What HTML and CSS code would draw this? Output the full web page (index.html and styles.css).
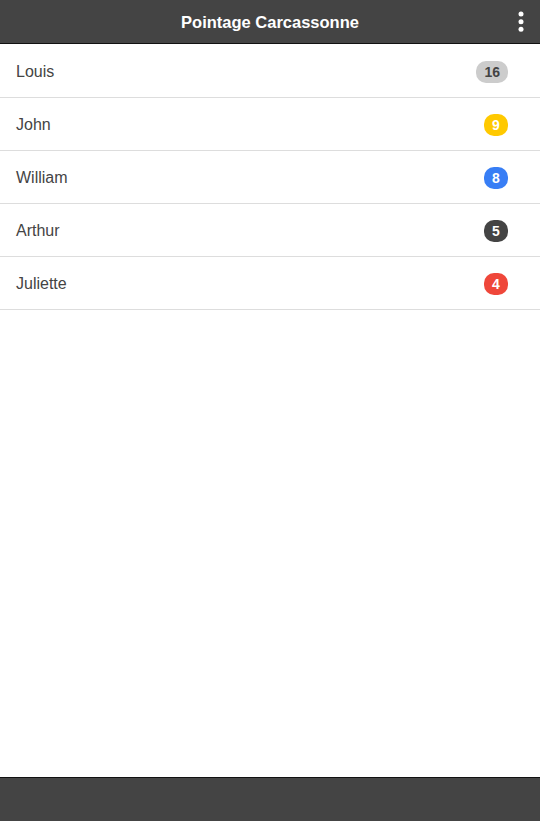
FILE: index.html
```html
<!DOCTYPE html>
<html>
<head>
<meta charset="utf-8">
<link rel="stylesheet" href="styles.css">
</head>
<body>
<div class="app">
  <header class="bar bar-header">
    <h1 class="title">Pointage Carcassonne</h1>
    <button class="menu" aria-label="menu">
      <svg width="6" height="22" viewBox="0 0 6 22"><circle cx="3" cy="3" r="2.5" fill="#fff"/><circle cx="3" cy="10.8" r="2.5" fill="#fff"/><circle cx="3" cy="18.3" r="2.5" fill="#fff"/></svg>
    </button>
  </header>
  <main class="content">
    <ul class="list">
      <li class="item"><span class="name">Louis</span><span class="badge badge-stable">16</span></li>
      <li class="item"><span class="name">John</span><span class="badge badge-energized">9</span></li>
      <li class="item"><span class="name">William</span><span class="badge badge-positive">8</span></li>
      <li class="item"><span class="name">Arthur</span><span class="badge badge-dark">5</span></li>
      <li class="item"><span class="name">Juliette</span><span class="badge badge-assertive">4</span></li>
    </ul>
  </main>
  <footer class="bar bar-footer"></footer>
</div>
</body>
</html>
```
FILE: styles.css
```css
* { box-sizing: border-box; }
html, body { margin: 0; padding: 0; height: 100%; }
body {
  font-family: "Liberation Sans", Arial, sans-serif;
  background: #fff;
  color: #444;
}
.app {
  display: flex;
  flex-direction: column;
  height: 821px;
}
.bar {
  background: #444;
  flex: none;
}
.bar-header {
  height: 44px;
  border-bottom: 1px solid #111;
  display: flex;
  align-items: center;
  justify-content: center;
  position: relative;
}
.title {
  margin: 0;
  color: #fff;
  font-size: 16.5px;
  font-weight: 700;
  padding-top: 1px;
}
.menu {
  position: absolute;
  right: 15px;
  top: 11px;
  width: 8px;
  height: 22px;
  padding: 0;
  border: 0;
  background: none;
  display: flex;
  justify-content: center;
}
.content { flex: 1; padding-top: 1px; }
.list { list-style: none; margin: 0; padding: 0; }
.item {
  height: 53px;
  border-bottom: 1px solid #ddd;
  display: flex;
  align-items: center;
  justify-content: space-between;
  padding: 1px 32px 0 16px;
  font-size: 16px;
}
.name { color: #444; }
.badge {
  display: inline-flex;
  align-items: center;
  justify-content: center;
  min-width: 24px;
  height: 22px;
  padding: 0 8px;
  border-radius: 10px;
  font-size: 14px;
  font-weight: 700;
  color: #fff;
}
.badge-stable { background: #ccc; color: #444; }
.badge-energized { background: #ffc900; }
.badge-positive { background: #387ef5; }
.badge-dark { background: #444; }
.badge-assertive { background: #ef473a; }
.bar-footer {
  height: 44px;
  border-top: 1px solid #111;
}
```
